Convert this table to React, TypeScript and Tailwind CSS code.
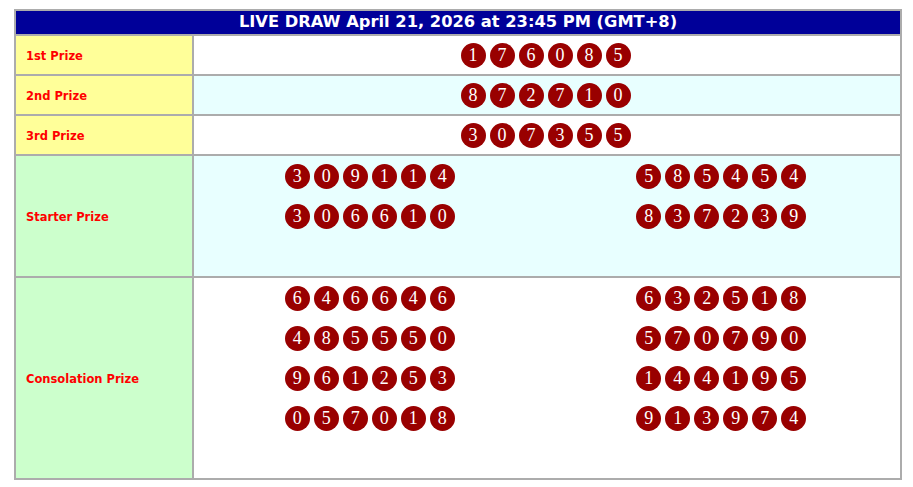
const prizes = [
  { label: "1st Prize", digits: "176085", bg: "bg-white" },
  { label: "2nd Prize", digits: "872710", bg: "bg-[#e8ffff]" },
  { label: "3rd Prize", digits: "307355", bg: "bg-white" },
];

const starter = [
  ["309114", "585454"],
  ["306610", "837239"],
];

const consolation = [
  ["646646", "632518"],
  ["485550", "570790"],
  ["961253", "144195"],
  ["057018", "913974"],
];

function Ball({ n }: { n: string }) {
  return (
    <span className="flex h-[25px] w-[25px] items-center justify-center rounded-full bg-[#990000] font-['Liberation_Serif',serif] text-[18px] leading-none text-white">
      {n}
    </span>
  );
}

function Number({ value }: { value: string }) {
  return (
    <div className="flex gap-[4px]">
      {value.split("").map((d, i) => (
        <Ball key={i} n={d} />
      ))}
    </div>
  );
}

function Label({ text, bg }: { text: string; bg: string }) {
  return (
    <div className={`flex items-center pl-[10px] pt-[3px] text-[11.5px] font-bold text-[#ff0000] ${bg}`}>
      {text}
    </div>
  );
}

function Grouped({ rows, empty }: { rows: string[][]; empty: number }) {
  return (
    <div className="grid grid-cols-2 pr-[3px]">
      {rows.map((r, i) =>
        r.map((v, j) => (
          <div key={`${i}-${j}`} className="flex h-[40px] items-center justify-center">
            <Number value={v} />
          </div>
        ))
      )}
      {Array.from({ length: empty }).map((_, i) => (
        <div key={`e${i}`} className="col-span-2 h-[40px]" />
      ))}
    </div>
  );
}

export default function App() {
  return (
    <div className="min-h-[487px] bg-white pl-[14px] pt-[9px] font-['DejaVu_Sans',Verdana,sans-serif]">
      <div className="grid w-[888px] grid-cols-[176px_706px] gap-[2px] bg-[#acacac] p-[2px]">
        <div className="col-span-2 flex h-[23px] items-center justify-center bg-[#000099] text-[16.3px] font-bold text-white">
          LIVE DRAW April 21, 2026 at 23:45 PM (GMT+8)
        </div>

        {prizes.map((p) => (
          <div key={p.label} className="contents">
            <Label text={p.label} bg="bg-[#ffff99]" />
            <div className={`flex h-[38px] items-center justify-center pr-[3px] ${p.bg}`}>
              <Number value={p.digits} />
            </div>
          </div>
        ))}

        <Label text="Starter Prize" bg="bg-[#ccffcc]" />
        <div className="bg-[#e8ffff]">
          <Grouped rows={starter} empty={1} />
        </div>

        <Label text="Consolation Prize" bg="bg-[#ccffcc]" />
        <div className="bg-white">
          <Grouped rows={consolation} empty={1} />
        </div>
      </div>
    </div>
  );
}
